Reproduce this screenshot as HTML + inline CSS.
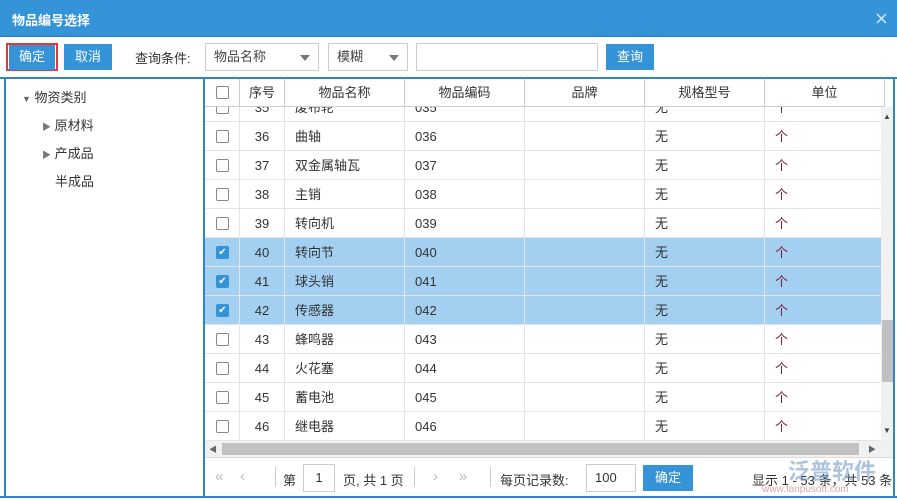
<html><head><style>
*{box-sizing:border-box;margin:0;padding:0}
body{width:897px;height:501px;overflow:hidden;background:#fff;font-family:"Liberation Sans","Noto Sans CJK SC",sans-serif;font-size:13px;color:#333;position:relative}
.a{position:absolute}
.title{left:0;top:0;width:897px;height:36px;background:#3593d8;color:#fff;font-weight:bold;font-size:13px;padding:10px 12px}
.btn{background:#3593d8;color:#fff;text-align:center;line-height:24px;height:25px}
.sel{border:1px solid #ccc;height:28px;line-height:26px;padding-left:8px;color:#444}
.tri{position:absolute;right:8px;top:11px;border-left:5px solid transparent;border-right:5px solid transparent;border-top:6px solid #777}
.row{position:absolute;left:205px;width:680px;height:29px;border-bottom:1px solid #e4e4e4;background:#fff}
.row.s{background:#a3d0f1}
.row>div{position:absolute;top:0;height:29px;line-height:29px;border-right:1px solid #e4e4e4;padding-left:10px}
.c0{left:0;width:35px}.c1{left:35px;width:45px;text-align:center;padding-left:0!important}.c2{left:80px;width:120px}.c3{left:200px;width:120px}.c4{left:320px;width:120px}.c5{left:440px;width:120px}.c6{left:560px;width:120px;color:#7a2040}
.cb{width:13px;height:13px;border:1px solid #888;border-radius:2px;position:absolute;left:11px;top:8px;background:#fff}
.ck{background:#3593d8;border-color:#3593d8;color:#fff;font-size:10px;line-height:11px;text-align:center}
.hd{top:78px;height:29px;background:#fff;border-bottom:1px solid #ccc}
.hd>div{border-right:1px solid #ccc;text-align:center;padding-left:0;color:#333}
</style></head><body>
<div class="a title">物品编号选择<svg style="position:absolute;right:10px;top:13px" width="11" height="11"><path d="M1 1L10 10M10 1L1 10" stroke="#d6e9f8" stroke-width="1.5"/></svg></div>
<div class="a" style="left:0;top:36px;width:897px;height:1px;background:#2b7bbf"></div>
<div class="a" style="left:6px;top:43px;width:52px;height:28px;border:2px solid #e53935"></div>
<div class="a btn" style="left:9px;top:45px;width:46px">确定</div>
<div class="a btn" style="left:64px;top:44px;width:48px;height:26px;line-height:26px">取消</div>
<div class="a" style="left:135px;top:48px;color:#333">查询条件:</div>
<div class="a sel" style="left:205px;top:43px;width:114px">物品名称<span class="tri"></span></div>
<div class="a sel" style="left:328px;top:43px;width:80px">模糊<span class="tri"></span></div>
<div class="a sel" style="left:416px;top:43px;width:182px"></div>
<div class="a btn" style="left:606px;top:44px;width:48px;height:26px;line-height:26px">查询</div>

<div class="a" style="left:205px;top:78px;width:688px;height:363px;overflow:hidden">
<div style="position:relative;left:-205px;top:-78px">
<div class="row" style="top:93px"><div class="c0"><span class="cb"></span></div><div class="c1">35</div><div class="c2">废布轮</div><div class="c3">035</div><div class="c4"></div><div class="c5">无</div><div class="c6">个</div></div>
<div class="row" style="top:122px"><div class="c0"><span class="cb"></span></div><div class="c1">36</div><div class="c2">曲轴</div><div class="c3">036</div><div class="c4"></div><div class="c5">无</div><div class="c6">个</div></div>
<div class="row" style="top:151px"><div class="c0"><span class="cb"></span></div><div class="c1">37</div><div class="c2">双金属轴瓦</div><div class="c3">037</div><div class="c4"></div><div class="c5">无</div><div class="c6">个</div></div>
<div class="row" style="top:180px"><div class="c0"><span class="cb"></span></div><div class="c1">38</div><div class="c2">主销</div><div class="c3">038</div><div class="c4"></div><div class="c5">无</div><div class="c6">个</div></div>
<div class="row" style="top:209px"><div class="c0"><span class="cb"></span></div><div class="c1">39</div><div class="c2">转向机</div><div class="c3">039</div><div class="c4"></div><div class="c5">无</div><div class="c6">个</div></div>
<div class="row s" style="top:238px"><div class="c0"><span class="cb ck">✔</span></div><div class="c1">40</div><div class="c2">转向节</div><div class="c3">040</div><div class="c4"></div><div class="c5">无</div><div class="c6">个</div></div>
<div class="row s" style="top:267px"><div class="c0"><span class="cb ck">✔</span></div><div class="c1">41</div><div class="c2">球头销</div><div class="c3">041</div><div class="c4"></div><div class="c5">无</div><div class="c6">个</div></div>
<div class="row s" style="top:296px"><div class="c0"><span class="cb ck">✔</span></div><div class="c1">42</div><div class="c2">传感器</div><div class="c3">042</div><div class="c4"></div><div class="c5">无</div><div class="c6">个</div></div>
<div class="row" style="top:325px"><div class="c0"><span class="cb"></span></div><div class="c1">43</div><div class="c2">蜂鸣器</div><div class="c3">043</div><div class="c4"></div><div class="c5">无</div><div class="c6">个</div></div>
<div class="row" style="top:354px"><div class="c0"><span class="cb"></span></div><div class="c1">44</div><div class="c2">火花塞</div><div class="c3">044</div><div class="c4"></div><div class="c5">无</div><div class="c6">个</div></div>
<div class="row" style="top:383px"><div class="c0"><span class="cb"></span></div><div class="c1">45</div><div class="c2">蓄电池</div><div class="c3">045</div><div class="c4"></div><div class="c5">无</div><div class="c6">个</div></div>
<div class="row" style="top:412px"><div class="c0"><span class="cb"></span></div><div class="c1">46</div><div class="c2">继电器</div><div class="c3">046</div><div class="c4"></div><div class="c5">无</div><div class="c6">个</div></div>
<div class="row hd"><div class="c0"><span class="cb"></span></div><div class="c1">序号</div><div class="c2">物品名称</div><div class="c3">物品编码</div><div class="c4">品牌</div><div class="c5">规格型号</div><div class="c6" style="color:#333">单位</div></div>
</div></div>

<div class="a" style="left:0;top:77px;width:897px;height:2px;background:#2e86c9"></div>
<div class="a" style="left:4px;top:78px;width:2px;height:419px;background:#2e86c9"></div>
<div class="a" style="left:203px;top:78px;width:2px;height:419px;background:#2e86c9"></div>
<div class="a" style="left:893px;top:78px;width:2px;height:419px;background:#2e86c9"></div>
<div class="a" style="left:0;top:496px;width:897px;height:2px;background:#2e86c9"></div>
<div class="a" style="left:22px;top:87px"><span style="font-size:9px;color:#666">▼</span> 物资类别</div>
<div class="a" style="left:42px;top:115px"><span style="font-size:9px;color:#777">▶</span> 原材料</div>
<div class="a" style="left:42px;top:143px"><span style="font-size:9px;color:#777">▶</span> 产成品</div>
<div class="a" style="left:55px;top:171px">半成品</div>

<div class="a" style="left:205px;top:441px;width:688px;height:16px;background:#f1f1f1"></div>
<div class="a" style="left:222px;top:443px;width:637px;height:12px;background:#c1c1c1"></div>
<div class="a" style="left:209px;top:444px;font-size:8px;color:#666">◀</div>
<div class="a" style="left:868px;top:444px;font-size:8px;color:#666">▶</div>
<div class="a" style="left:881px;top:107px;width:12px;height:334px;background:#f1f1f1"></div>
<div class="a" style="left:882px;top:320px;width:11px;height:62px;background:#c1c1c1"></div>
<div class="a" style="left:883px;top:112px;font-size:8px;color:#444">▲</div>
<div class="a" style="left:883px;top:426px;font-size:8px;color:#444">▼</div>
<div class="a" style="left:205px;top:457px;width:688px;height:1px;background:#ddd"></div>
<div class="a" style="left:215px;top:468px;color:#bbb;font-size:15px">«&nbsp;&nbsp;&nbsp;&nbsp;‹</div>
<div class="a" style="left:275px;top:467px;width:1px;height:20px;background:#ccc"></div>
<div class="a" style="left:283px;top:470px">第</div>
<div class="a" style="left:303px;top:464px;width:32px;height:28px;border:1px solid #ccc;text-align:center;line-height:26px">1</div>
<div class="a" style="left:343px;top:470px">页, 共 1 页</div>
<div class="a" style="left:414px;top:467px;width:1px;height:20px;background:#ccc"></div>
<div class="a" style="left:433px;top:468px;color:#bbb;font-size:15px">›&nbsp;&nbsp;&nbsp;&nbsp;&nbsp;»</div>
<div class="a" style="left:490px;top:467px;width:1px;height:20px;background:#ccc"></div>
<div class="a" style="left:500px;top:470px">每页记录数:</div>
<div class="a" style="left:586px;top:464px;width:50px;height:28px;border:1px solid #ccc;line-height:26px;padding-left:8px">100</div>
<div class="a btn" style="left:643px;top:465px;width:50px;height:26px;line-height:26px">确定</div>
<div class="a" style="left:752px;top:470px">显示 1 - 53 条，共 53 条</div>
<div class="a" style="left:788px;top:454px;font-size:22px;font-weight:bold;color:#7a9cc8;opacity:.6">泛普软件</div>
<div class="a" style="left:762px;top:484px;font-size:10px;color:#d08080;opacity:.7">www.fanpusoft.com</div>
</body></html>
